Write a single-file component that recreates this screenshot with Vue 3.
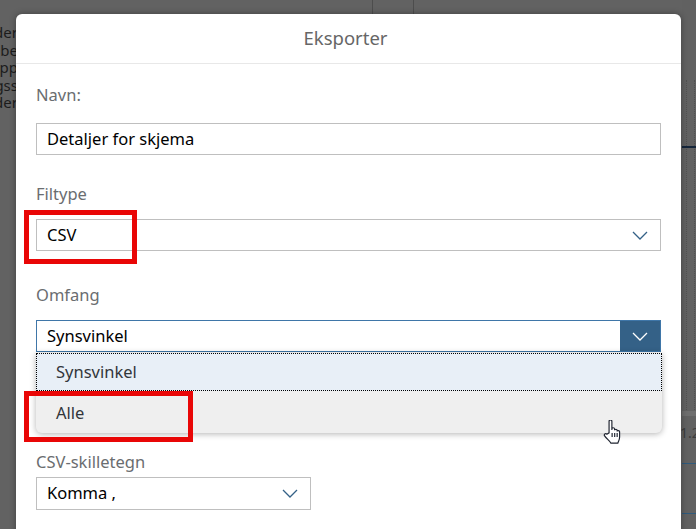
<template>
  <div class="screen">
    <div class="backdrop-top">
      <i class="rule rule-a"></i>
      <i class="rule rule-b"></i>
    </div>
    <div class="backdrop-left">
      <span v-for="(line, i) in leftLines" :key="i">{{ line }}</span>
    </div>
    <div class="backdrop-right">
      <i class="dots dots-a"></i>
      <i class="dots dots-b"></i>
      <div class="chart-line"></div>
      <div class="chart-axis"></div>
      <span class="chart-tick">1.2</span>
      <div class="blue-line blue-a"></div>
      <div class="blue-line blue-b"></div>
    </div>

    <div class="dialog">
      <header class="dialog-title">Eksporter</header>
      <div class="dialog-body">
        <div class="field field-name">
          <label>Navn:</label>
          <div class="input">Detaljer for skjema</div>
        </div>

        <div class="field field-type">
          <label>Filtype</label>
          <div class="input">
            CSV
            <svg class="chev" viewBox="0 0 16 9"><path d="M1 1l7 7 7-7" /></svg>
          </div>
        </div>

        <div class="field field-open">
          <label>Omfang</label>
          <div class="input input-open">
            Synsvinkel
            <span class="arrow-btn">
              <svg class="chev chev-white" viewBox="0 0 16 9"><path d="M1 1l7 7 7-7" /></svg>
            </span>
          </div>
          <ul class="menu">
            <li v-for="item in scopes" :key="item.name" :class="item.cls">{{ item.name }}</li>
          </ul>
        </div>

        <div class="field field-last">
          <label>CSV-skilletegn</label>
          <div class="input input-short">
            Komma ,
            <svg class="chev" viewBox="0 0 16 9"><path d="M1 1l7 7 7-7" /></svg>
          </div>
        </div>
      </div>
    </div>

    <div class="mark mark-csv"></div>
    <div class="mark mark-alle"></div>

    <svg class="cursor" viewBox="1 2 15 20.5">
      <path d="M6 13V3.2c0-1.6 2.4-1.6 2.4 0V10.5V9.6c0-1.3 2.3-1.3 2.3 0v1.2c0-1.2 2.2-1.2 2.2 0v1c0-1.1 2.1-1 2.1.2v4.6c0 2.6-1 3.4-1.5 5.2H7.6C6.8 20 3.8 18 2.2 15.6c-.9-1.4.7-2.6 1.9-1.5z" />
      <path d="M8.6 13v3.5M10.8 13v3.5M12.9 13v3.5" />
    </svg>
  </div>
</template>

<script setup>
const leftLines = ["der", "be", "opp", "gss", "der"];
const scopes = [
  { name: "Synsvinkel", cls: "selected" },
  { name: "Alle", cls: "hovered" },
];
</script>

<style>
html,
body {
  margin: 0;
  background: #5f5f5f;
}
</style>

<style scoped>
.screen {
  position: relative;
  width: 696px;
  height: 529px;
  overflow: hidden;
  background: #626262;
  font-family: "Noto Sans", "Open Sans", sans-serif;
  font-size: 16.5px;
  color: #000;
}

.backdrop-top {
  position: absolute;
  left: 0;
  top: 0;
  width: 696px;
  height: 14px;
}

.rule {
  position: absolute;
  top: 0;
  width: 1px;
  height: 14px;
  background: #4d4d4d;
}

.rule-a {
  left: 372px;
}

.rule-b {
  left: 413px;
}

.backdrop-left {
  position: absolute;
  right: 678px;
  top: 24px;
  display: flex;
  flex-direction: column;
  align-items: flex-end;
  font-size: 15px;
  line-height: 17.6px;
  color: #1c1c1c;
}

.backdrop-right {
  position: absolute;
  left: 682px;
  top: 0;
  width: 14px;
  height: 529px;
  background: #616161;
}

.dots {
  position: absolute;
  top: 80px;
  height: 330px;
  border-left: 1px dotted #505050;
}

.dots-a {
  left: 4px;
}

.dots-b {
  left: 12px;
}

.chart-line {
  position: absolute;
  left: 0;
  top: 146px;
  width: 14px;
  height: 2px;
  background: #14253a;
}

.chart-axis {
  position: absolute;
  left: 0;
  top: 411px;
  width: 14px;
  height: 5px;
  background: #6e6e6e;
}

.chart-tick {
  position: absolute;
  left: -2px;
  top: 423px;
  font-size: 14px;
  color: #3d3d3d;
}

.blue-line {
  position: absolute;
  left: 0;
  width: 14px;
  height: 1px;
  background: #2f5a7c;
}

.blue-a {
  top: 463px;
}

.blue-b {
  top: 513px;
}

.dialog {
  position: absolute;
  left: 16px;
  top: 14px;
  width: 665px;
  height: 530px;
  background: #fff;
  border-radius: 6px 6px 0 0;
  box-shadow: 0 0 6px rgba(0, 0, 0, 0.35);
}

.dialog-title {
  height: 49px;
  line-height: 47px;
  padding-right: 6px;
  border-bottom: 1px solid #e8e8e8;
  text-align: center;
  font-size: 18.5px;
  color: #666;
}

.dialog-body {
  display: flex;
  flex-direction: column;
  padding: 19px 20px 0;
}

.field {
  position: relative;
  display: flex;
  flex-direction: column;
}

.field label {
  height: 37px;
  line-height: 24px;
  color: #6a6d70;
}

.field-name label {
  height: 40px;
}

.field-type {
  margin-top: 27px;
}

.field-open {
  margin-top: 32px;
}

.field-last {
  margin-top: 98px;
}

.field-last label {
  height: 27px;
}

.input {
  position: relative;
  box-sizing: border-box;
  height: 32px;
  line-height: 30px;
  padding-left: 10px;
  border: 1px solid #bfbfbf;
  background: #fff;
}

.input-open {
  border-color: #3f76a8;
}

.input-short {
  width: 275px;
  height: 33px;
}

.chev {
  position: absolute;
  right: 12px;
  top: 11px;
  width: 16px;
  height: 9px;
  fill: none;
  stroke: #346187;
  stroke-width: 1.3;
}

.arrow-btn {
  position: absolute;
  right: 0;
  top: 0;
  width: 40px;
  height: 30px;
  background: #346187;
}

.chev-white {
  stroke: #fff;
}

.menu {
  position: absolute;
  left: 0;
  top: 70px;
  width: 626px;
  height: 80px;
  margin: 0;
  padding: 0;
  list-style: none;
  border-radius: 0 0 6px 6px;
  overflow: hidden;
  background: #efefef;
  color: #32363a;
  box-shadow: 0 1px 6px rgba(0, 0, 0, 0.3);
  z-index: 2;
}

.menu li {
  box-sizing: border-box;
  padding-left: 20px;
}

.selected {
  height: 38px;
  line-height: 36px;
  background: #e8eff7;
  border: 1px dotted #000;
  padding-left: 19px !important;
}

.hovered {
  height: 42px;
  line-height: 43px;
}

.mark {
  position: absolute;
  box-sizing: border-box;
  border: 5px solid #e90606;
  z-index: 3;
}

.mark-csv {
  left: 24px;
  top: 210px;
  width: 113px;
  height: 54px;
}

.mark-alle {
  left: 24px;
  top: 391px;
  width: 169px;
  height: 51px;
}

.cursor {
  position: absolute;
  left: 603px;
  top: 420px;
  width: 18px;
  height: 24px;
  fill: #fff;
  stroke: #1f2430;
  stroke-width: 1;
  z-index: 4;
}
</style>
